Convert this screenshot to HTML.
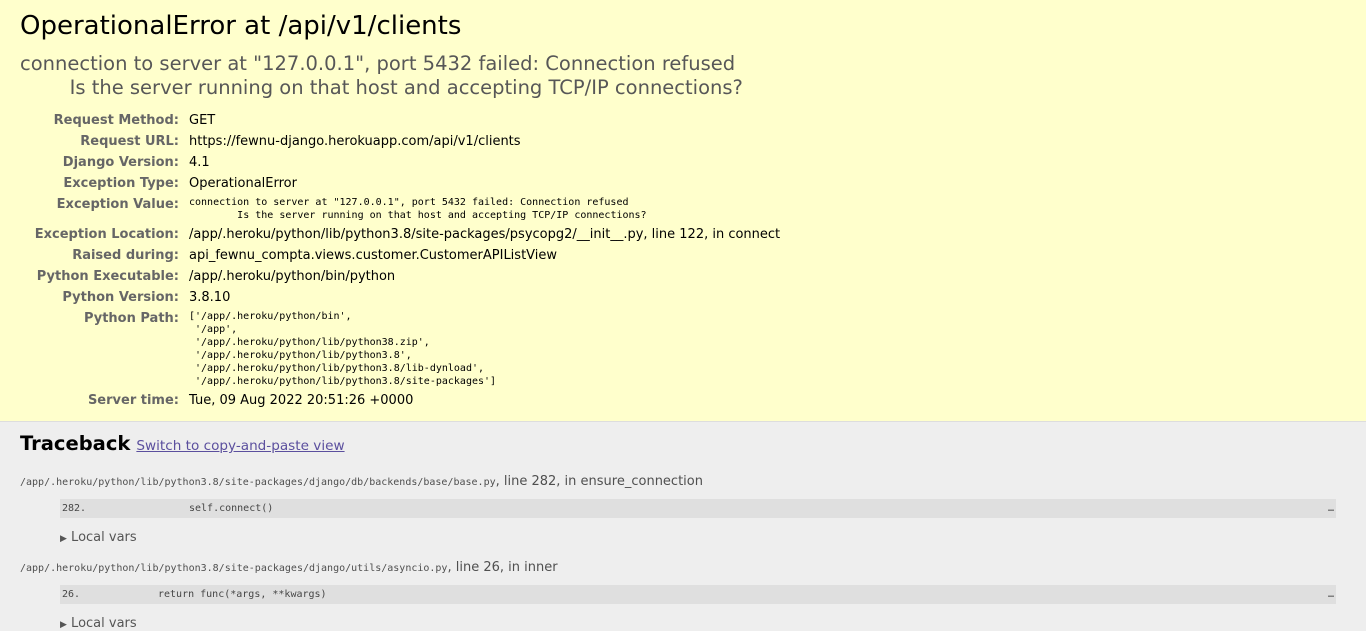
<!DOCTYPE html>
<html><head><meta charset="utf-8"><style>
*{margin:0;padding:0}
body{font-family:"DejaVu Sans",sans-serif;font-size:13px;color:#000;background:#eee;width:1366px;height:618px;overflow:hidden;position:relative}
#summary{position:absolute;left:0;top:0;width:1366px;height:421px;background:#ffc;border-bottom:1px solid #ddd}
h1{position:absolute;left:20px;top:10px;font-size:26px;font-weight:normal;line-height:32px;white-space:nowrap}
.ev{position:absolute;left:20px;top:52px;font-size:19.5px;line-height:24px;color:#575757;white-space:pre;font-family:"DejaVu Sans",sans-serif;tab-size:8}
.row{position:absolute;left:0;width:1366px;line-height:16px}
.row .th{position:absolute;right:1187px;font-weight:bold;color:#666;white-space:nowrap}
.row .td{position:absolute;left:189px;white-space:nowrap}
.row .mono{font-family:"DejaVu Sans Mono",monospace;font-size:10px;line-height:13px;white-space:pre;tab-size:8}
#tb{position:absolute;left:0;top:426px;width:1366px}
h2{position:absolute;left:20px;top:5px;font-size:19.5px;font-weight:bold;white-space:nowrap;line-height:26px}
h2 a{font-size:13.6px;font-weight:normal;color:#5b4f9e;margin-left:6px}
.f{position:absolute;left:20px;color:#4f4f4f;white-space:nowrap}
.f code{font-family:"DejaVu Sans Mono",monospace;font-size:10px}
.cl{position:absolute;left:60px;width:1276px;height:19px;background:#dfdfdf;color:#464646;font-family:"DejaVu Sans Mono",monospace;font-size:10px;line-height:19px}
.cl span{position:absolute}
.lv{position:absolute;left:60px;color:#555;white-space:nowrap}
</style></head><body>
<div id="summary">
<h1>OperationalError at /api/v1/clients</h1>
<div class="ev">connection to server at "127.0.0.1", port 5432 failed: Connection refused
	Is the server running on that host and accepting TCP/IP connections?</div>
<div class="row" style="top:113px"><span class="th">Request Method:</span><span class="td">GET</span></div>
<div class="row" style="top:134px"><span class="th">Request URL:</span><span class="td">https://fewnu-django.herokuapp.com/api/v1/clients</span></div>
<div class="row" style="top:155px"><span class="th">Django Version:</span><span class="td">4.1</span></div>
<div class="row" style="top:176px"><span class="th">Exception Type:</span><span class="td">OperationalError</span></div>
<div class="row" style="top:197px"><span class="th">Exception Value:</span><span class="td mono" style="top:-1px">connection to server at "127.0.0.1", port 5432 failed: Connection refused
	Is the server running on that host and accepting TCP/IP connections?</span></div>
<div class="row" style="top:227px"><span class="th">Exception Location:</span><span class="td">/app/.heroku/python/lib/python3.8/site-packages/psycopg2/__init__.py, line 122, in connect</span></div>
<div class="row" style="top:248px"><span class="th">Raised during:</span><span class="td">api_fewnu_compta.views.customer.CustomerAPIListView</span></div>
<div class="row" style="top:269px"><span class="th">Python Executable:</span><span class="td">/app/.heroku/python/bin/python</span></div>
<div class="row" style="top:290px"><span class="th">Python Version:</span><span class="td">3.8.10</span></div>
<div class="row" style="top:311px"><span class="th">Python Path:</span><span class="td mono" style="top:-1px">['/app/.heroku/python/bin',
 '/app',
 '/app/.heroku/python/lib/python38.zip',
 '/app/.heroku/python/lib/python3.8',
 '/app/.heroku/python/lib/python3.8/lib-dynload',
 '/app/.heroku/python/lib/python3.8/site-packages']</span></div>
<div class="row" style="top:393px"><span class="th">Server time:</span><span class="td">Tue, 09 Aug 2022 20:51:26 +0000</span></div>
</div>
<div id="tb">
<h2>Traceback<a href="#">Switch to copy-and-paste view</a></h2>
<div class="f" style="top:48px"><code>/app/.heroku/python/lib/python3.8/site-packages/django/db/backends/base/base.py</code>, line 282, in ensure_connection</div>
<div class="cl" style="top:73px"><span style="left:2px">282.</span><span style="left:129px">self.connect()</span><span style="right:2px">…</span></div>
<div class="lv" style="top:104px"><span style="font-size:9px">▶</span> Local vars</div>
<div class="f" style="top:134px"><code>/app/.heroku/python/lib/python3.8/site-packages/django/utils/asyncio.py</code>, line 26, in inner</div>
<div class="cl" style="top:159px"><span style="left:2px">26.</span><span style="left:98px">return func(*args, **kwargs)</span><span style="right:2px">…</span></div>
<div class="lv" style="top:190px"><span style="font-size:9px">▶</span> Local vars</div>
</div>
</body></html>
